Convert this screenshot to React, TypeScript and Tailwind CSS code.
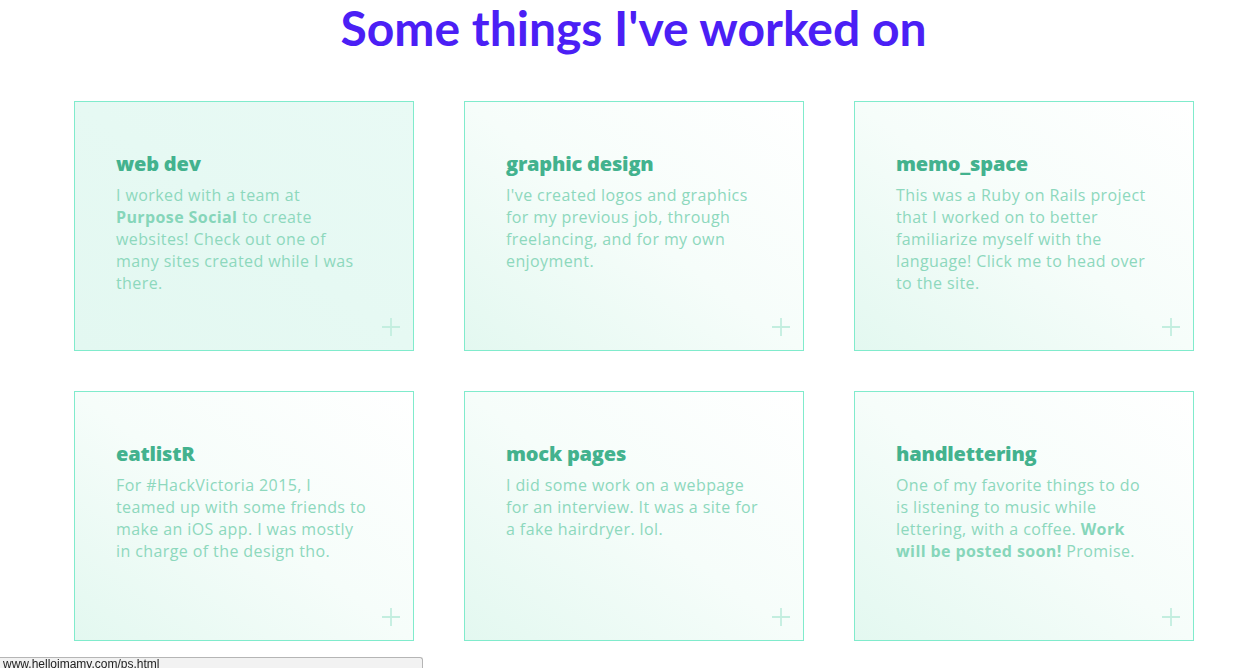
import React from "react";

type Card = { title: string; lines: React.ReactNode[]; first?: boolean };

const B = ({ children }: { children: React.ReactNode }) => (
  <span className="font-bold text-[#86d6ba]">{children}</span>
);

const cards: Card[] = [
  {
    title: "web dev",
    first: true,
    lines: [
      "I worked with a team at",
      <>
        <B>Purpose Social</B> to create
      </>,
      "websites! Check out one of",
      "many sites created while I was",
      "there.",
    ],
  },
  {
    title: "graphic design",
    lines: [
      "I've created logos and graphics",
      "for my previous job, through",
      "freelancing, and for my own",
      "enjoyment.",
    ],
  },
  {
    title: "memo_space",
    lines: [
      "This was a Ruby on Rails project",
      "that I worked on to better",
      "familiarize myself with the",
      "language! Click me to head over",
      "to the site.",
    ],
  },
  {
    title: "eatlistR",
    lines: [
      "For #HackVictoria 2015, I",
      "teamed up with some friends to",
      "make an iOS app. I was mostly",
      "in charge of the design tho.",
    ],
  },
  {
    title: "mock pages",
    lines: [
      "I did some work on a webpage",
      "for an interview. It was a site for",
      "a fake hairdryer. lol.",
    ],
  },
  {
    title: "handlettering",
    lines: [
      "One of my favorite things to do",
      "is listening to music while",
      <>
        lettering, with a coffee. <B>Work</B>
      </>,
      <>
        <B>will be posted soon!</B> Promise.
      </>,
    ],
  },
];

function Plus() {
  return (
    <svg
      className="absolute right-[12px] bottom-[13px]"
      width="20"
      height="20"
      viewBox="0 0 20 20"
    >
      <path d="M10 1 V19 M1 10 H19" stroke="#c3eedf" strokeWidth="1.8" />
    </svg>
  );
}

function CardView({ c }: { c: Card }) {
  return (
    <div
      className={
        "relative h-[250px] border border-[#80ebcc] pt-[48px] pl-[41px] " +
        (c.first
          ? "bg-gradient-to-tr from-[#e3f8f1] via-[#e6f9f3] to-[#e9faf5]"
          : "bg-gradient-to-tr from-[#e3f8f0] via-[#f6fdfa] to-white")
      }
    >
      <div className="text-[20px] font-extrabold leading-[28px] tracking-[-0.2px] text-[#43b28e]">
        {c.title}
      </div>
      <div className="mt-[6px] text-[16px] font-medium leading-[22px] tracking-[0.4px] text-[#8dd8bd]">
        {c.lines.map((l, i) => (
          <div key={i} className="whitespace-nowrap">
            {l}
          </div>
        ))}
      </div>
      <Plus />
    </div>
  );
}

export default function App() {
  return (
    <div
      className="relative min-h-[668px] bg-white"
      style={{ fontFamily: '"Open Sans", "Noto Sans", sans-serif' }}
    >
      <h1
        className="pl-[17px] pt-[1px] text-center text-[48px] font-bold leading-[54px] text-[#4b1ff5]"
        style={{ fontFamily: 'Lato, "Noto Sans", sans-serif' }}
      >
        Some things I've worked on
      </h1>
      <div className="mt-[46px] grid grid-cols-[340px_340px_340px] gap-x-[50px] gap-y-[40px] pl-[74px]">
        {cards.map((c) => (
          <CardView key={c.title} c={c} />
        ))}
      </div>
      <div
        className="fixed bottom-0 left-0 h-[11px] w-[423px] overflow-hidden rounded-tr-[3px] border-t border-r border-[#b5b5b5] bg-[#f2f2f2] pl-[3px] text-[12px] leading-[13px] text-[#222]"
        style={{ fontFamily: '"Liberation Sans", Arial, sans-serif' }}
      >
        www.helloimamy.com/ps.html
      </div>
    </div>
  );
}
